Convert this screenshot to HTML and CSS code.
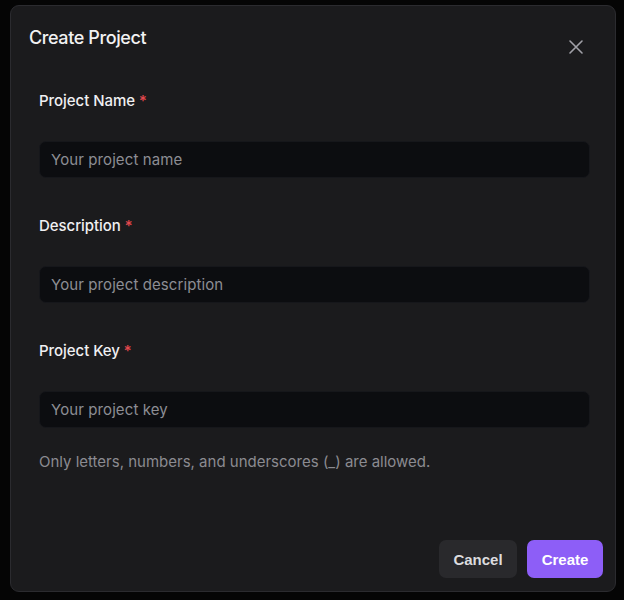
FILE: index.html
```html
<!DOCTYPE html>
<html lang="en">
<head>
<meta charset="utf-8">
<title>Create Project</title>
<link rel="stylesheet" href="styles.css">
</head>
<body>
<div class="dialog">
  <div class="header">
    <h2 class="title">Create Project</h2>
    <button class="close" aria-label="Close">
      <svg width="16" height="16" viewBox="0 0 16 16" fill="none" stroke="currentColor" stroke-width="1.6" stroke-linecap="round"><path d="M2 2L14 14M14 2L2 14"/></svg>
    </button>
  </div>
  <form class="form">
    <div class="field">
      <label class="label">Project Name <span class="req">*</span></label>
      <input class="input" placeholder="Your project name">
    </div>
    <div class="field">
      <label class="label">Description <span class="req">*</span></label>
      <input class="input" placeholder="Your project description">
    </div>
    <div class="field">
      <label class="label">Project Key <span class="req">*</span></label>
      <input class="input" placeholder="Your project key">
      <p class="hint">Only letters, numbers, and underscores (_) are allowed.</p>
    </div>
  </form>
  <div class="footer">
    <button class="btn btn-cancel">Cancel</button>
    <button class="btn btn-create">Create</button>
  </div>
</div>
</body>
</html>
```
FILE: styles.css
```css
html, body {
  margin: 0;
  background: #050505;
}
body {
  padding: 5px 8px 0 10px;
  font-family: Inter, "Noto Sans", sans-serif;
  color: #ededef;
}
.dialog {
  box-sizing: border-box;
  width: 606px;
  height: 587px;
  background: #1b1b1d;
  border: 1px solid #2b2b2f;
  border-radius: 9px;
  display: flex;
  flex-direction: column;
}
.header {
  display: flex;
  align-items: flex-start;
  justify-content: space-between;
  padding: 19px 27px 0 18px;
}
.title {
  margin: 0;
  font-size: 18px;
  line-height: 26px;
  font-weight: 500;
  letter-spacing: -0.4px;
  color: #f2f2f3;
}
.close {
  margin-top: 10px;
  width: 24px;
  height: 24px;
  padding: 0;
  border: 0;
  background: transparent;
  color: #a1a1a8;
  display: flex;
  align-items: center;
  justify-content: center;
}
.form {
  margin: 0;
  padding: 32px 25px 0 28px;
  display: flex;
  flex-direction: column;
  gap: 38px;
}
.field {
  display: flex;
  flex-direction: column;
}
.label {
  font-size: 15px;
  line-height: 20px;
  font-weight: 500;
  letter-spacing: -0.05px;
  color: #f0f0f2;
  margin-bottom: 30px;
}
.req {
  color: #e5484d;
}
.input {
  box-sizing: border-box;
  height: 37px;
  width: 100%;
  padding: 0 11px;
  background: #0c0d10;
  border: 1px solid #16171b;
  border-radius: 7px;
  font-family: inherit;
  font-size: 15px;
  letter-spacing: 0.1px;
  color: #ededef;
  outline: none;
}
.input::placeholder {
  color: #8d8d94;
}
.hint {
  margin: 24px 0 0;
  font-size: 15px;
  line-height: 20px;
  letter-spacing: 0;
  color: #8b8b91;
}
.footer {
  margin-top: auto;
  display: flex;
  justify-content: flex-end;
  gap: 10px;
  padding: 0 12px 13px 0;
}
.btn {
  height: 38px;
  border: 0;
  border-radius: 7px;
  font-family: "Liberation Sans", Arial, sans-serif;
  font-weight: 700;
  font-size: 15px;
  padding: 0 14px;
}
.btn-cancel {
  width: 78px;
  background: #29292c;
  color: #dcdcdf;
}
.btn-create {
  width: 76px;
  background: #8d5ef7;
  color: #ffffff;
}
```
